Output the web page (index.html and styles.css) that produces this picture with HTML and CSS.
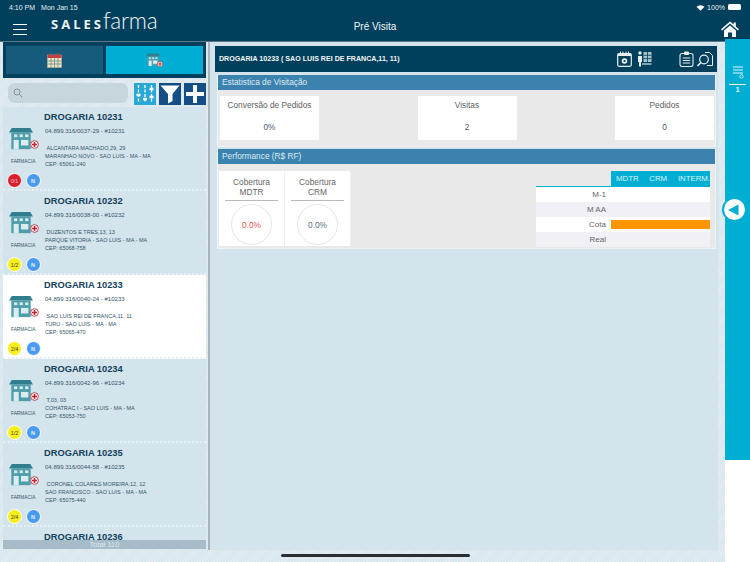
FILE: index.html
```html
<!DOCTYPE html>
<html lang="pt">
<head>
<meta charset="utf-8">
<title>Pré Visita</title>
<link rel="stylesheet" href="styles.css">
</head>
<body>
<svg class="defs" width="0" height="0">
  <defs>
    <symbol id="shop" viewBox="0 0 26 26">
      <rect x="2.5" y="6" width="21" height="18" fill="#4f9dab"/>
      <path d="M3 1h20l3 5H0z" fill="#2f7f8e"/>
      <rect x="5.500" y="8" width="3.500" height="3" fill="#d8eef0"/>
      <rect x="11.500" y="8" width="3.500" height="3" fill="#d8eef0"/>
      <rect x="17.500" y="8" width="3.500" height="3" fill="#d8eef0"/>
      <rect x="5" y="14" width="5.500" height="10" fill="#d8eef0"/>
      <rect x="13" y="14" width="8" height="6" fill="#d8eef0"/>
    </symbol>
    <symbol id="cross" viewBox="0 0 10 10">
      <circle cx="5" cy="5" r="4.300" fill="#fff" stroke="#b5323f" stroke-width="1"/>
      <path d="M5 2.200v5.600M2.200 5h5.600" stroke="#c8202f" stroke-width="1.800"/>
    </symbol>
  </defs>
</svg>
<div class="app">
  <header class="top">
    <div class="status">
      <span class="status-left"><span>4:10 PM</span><span>Mon Jan 15</span></span>
      <span class="status-right">
        <svg width="9" height="7" viewBox="0 0 18 14"><path d="M9 13.500 1 5.500a11.500 11.500 0 0 1 16 0z" fill="#fff"/></svg>
        <span>100%</span>
        <span class="battery"></span>
      </span>
    </div>
    <div class="nav">
      <div class="nav-left">
        <button class="burger" aria-label="Menu"><i></i><i></i><i></i></button>
        <div class="logo"><b>SALES</b><span>farma</span></div>
      </div>
      <div class="nav-title">Pré Visita</div>
      <div class="nav-right">
        <svg width="18" height="16" viewBox="0 0 18 16"><path d="M9 .5 0 8.200l1 1.200L9 2.600l8 6.800 1-1.200-3.200-2.700V1.400h-2.200v2.200z" fill="#fff"/><path d="M3 9.600 9 4.400l6 5.200V16h-4v-4.500H7V16H3z" fill="#fff"/></svg>
      </div>
    </div>
  </header>

  <div class="body">
    <aside class="side">
      <div class="tabs">
        <div class="tab">
          <svg width="15" height="15" viewBox="0 0 15 15"><rect x=".5" y="2" width="14" height="12.500" fill="#efe7c8" stroke="#c2b994" stroke-width=".5"/><rect x=".5" y="2" width="14" height="3" fill="#c8403c"/><rect x="3" y=".5" width="1.600" height="3" fill="#c8403c"/><rect x="10.400" y=".5" width="1.600" height="3" fill="#c8403c"/><path d="M.5 8h14M.5 11h14M4 5v9.500M7.500 5v9.500M11 5v9.500" stroke="#5d7f7c" stroke-width=".7"/></svg>
        </div>
        <div class="tab tab-on">
          <span class="pharm small"><svg class="pharm-b" viewBox="0 0 26 26"><use href="#shop"/></svg><svg class="pharm-c" viewBox="0 0 10 10"><use href="#cross"/></svg></span>
        </div>
      </div>
      <div class="tools">
        <div class="search">
          <svg width="10" height="10" viewBox="0 0 10 10"><circle cx="4" cy="4" r="3" fill="none" stroke="#7d8a90" stroke-width=".9"/><path d="m6.300 6.300 3 3" stroke="#7d8a90" stroke-width="1"/></svg>
        </div>
        <div class="tool tool-cyan">
          <svg width="22" height="22" viewBox="0 0 22 22"><path d="M4.500 2v18M11 2v18M17.500 2v18" stroke="#fff" stroke-width="1.300" stroke-dasharray="3 1.500"/><path d="M2.500 12h4M9 16h4M15.500 6h4M15.500 14h4" stroke="#fff" stroke-width="2.400"/></svg>
        </div>
        <div class="tool">
          <svg width="22" height="22" viewBox="0 0 22 22"><path d="M1.500 2.500h19l-7 8.500v7l-4.500 2.500V11z" fill="#fff"/></svg>
        </div>
        <div class="tool">
          <svg width="22" height="22" viewBox="0 0 22 22"><path d="M9 2h4v7h7v4h-7v7H9v-7H2V9h7z" fill="#fff"/></svg>
        </div>
      </div>
      <div class="list">
        <article class="item">
          <div class="item-left">
            <span class="pharm"><svg class="pharm-b" viewBox="0 0 26 26"><use href="#shop"/></svg><svg class="pharm-c" viewBox="0 0 10 10"><use href="#cross"/></svg></span>
            <div class="kind">FARMACIA</div>
            <div class="badges"><span class="badge red">0/1</span><span class="badge blue">N</span></div>
          </div>
          <div class="item-text">
            <h3>DROGARIA 10231</h3>
            <p class="cnpj">04.899.316/0037-29 - #10231</p>
            <p>&nbsp;ALCANTARA MACHADO,29, 29</p>
            <p>MARANHAO NOVO - SAO LUIS - MA - MA</p>
            <p>CEP: 65061-240</p>
          </div>
        </article>
        <article class="item">
          <div class="item-left">
            <span class="pharm"><svg class="pharm-b" viewBox="0 0 26 26"><use href="#shop"/></svg><svg class="pharm-c" viewBox="0 0 10 10"><use href="#cross"/></svg></span>
            <div class="kind">FARMACIA</div>
            <div class="badges"><span class="badge yellow">1/2</span><span class="badge blue">N</span></div>
          </div>
          <div class="item-text">
            <h3>DROGARIA 10232</h3>
            <p class="cnpj">04.899.316/0038-00 - #10232</p>
            <p>&nbsp;DUZENTOS E TRES,13, 13</p>
            <p>PARQUE VITORIA - SAO LUIS - MA - MA</p>
            <p>CEP: 65068-758</p>
          </div>
        </article>
        <article class="item item-on">
          <div class="item-left">
            <span class="pharm"><svg class="pharm-b" viewBox="0 0 26 26"><use href="#shop"/></svg><svg class="pharm-c" viewBox="0 0 10 10"><use href="#cross"/></svg></span>
            <div class="kind">FARMACIA</div>
            <div class="badges"><span class="badge yellow">2/4</span><span class="badge blue">N</span></div>
          </div>
          <div class="item-text">
            <h3>DROGARIA 10233</h3>
            <p class="cnpj">04.899.316/0040-24 - #10233</p>
            <p>&nbsp;SAO LUIS REI DE FRANCA,11, 11</p>
            <p>TURU - SAO LUIS - MA - MA</p>
            <p>CEP: 65065-470</p>
          </div>
        </article>
        <article class="item">
          <div class="item-left">
            <span class="pharm"><svg class="pharm-b" viewBox="0 0 26 26"><use href="#shop"/></svg><svg class="pharm-c" viewBox="0 0 10 10"><use href="#cross"/></svg></span>
            <div class="kind">FARMACIA</div>
            <div class="badges"><span class="badge yellow">1/2</span><span class="badge blue">N</span></div>
          </div>
          <div class="item-text">
            <h3>DROGARIA 10234</h3>
            <p class="cnpj">04.899.316/0042-96 - #10234</p>
            <p>&nbsp;T,03, 03</p>
            <p>COHATRAC I - SAO LUIS - MA - MA</p>
            <p>CEP: 65053-750</p>
          </div>
        </article>
        <article class="item">
          <div class="item-left">
            <span class="pharm"><svg class="pharm-b" viewBox="0 0 26 26"><use href="#shop"/></svg><svg class="pharm-c" viewBox="0 0 10 10"><use href="#cross"/></svg></span>
            <div class="kind">FARMACIA</div>
            <div class="badges"><span class="badge yellow">2/4</span><span class="badge blue">N</span></div>
          </div>
          <div class="item-text">
            <h3>DROGARIA 10235</h3>
            <p class="cnpj">04.899.316/0044-58 - #10235</p>
            <p>&nbsp;CORONEL COLARES MOREIRA,12, 12</p>
            <p>SAO FRANCISCO - SAO LUIS - MA - MA</p>
            <p>CEP: 65075-440</p>
          </div>
        </article>
        <article class="item">
          <div class="item-left"></div>
          <div class="item-text"><h3>DROGARIA 10236</h3></div>
        </article>
      </div>
      <div class="total">Total 110</div>
    </aside>

    <main class="main">
      <div class="title-bar">
        <span class="title-text">DROGARIA 10233 ( SAO LUIS REI DE FRANCA,11, 11)</span>
        <div class="title-icons">
          <svg width="15" height="16" viewBox="0 0 15 16"><rect x=".7" y="2.500" width="13.600" height="12.800" rx="1.500" fill="none" stroke="#e8eef0" stroke-width="1.200"/><path d="M.7 5h13.600v-1.500a1 1 0 0 0-1-1H1.700a1 1 0 0 0-1 1z" fill="#e8eef0"/><path d="M3.500.5v3M6 .5v3M9 .5v3M11.500.5v3" stroke="#e8eef0" stroke-width="1"/><circle cx="7.500" cy="10" r="2.800" fill="#e8eef0"/><circle cx="7.500" cy="10" r="1.100" fill="#00405c"/></svg>
          <svg class="ico-gap1" width="15" height="16" viewBox="0 0 15 16"><circle cx="3" cy="2" r="1.700" fill="#e8eef0"/><path d="M1 5h4v6H4v4.500H2V11H1z" fill="#e8eef0"/><rect x="6.500" y="1" width="8" height="10" fill="#a9c3cb"/><path d="M10.500 1v10M6.500 4.300h8M6.500 7.600h8" stroke="#00405c" stroke-width=".8"/><path d="M5 13h9.500" stroke="#a9c3cb" stroke-width="1.500"/></svg>
          <svg class="ico-gap2" width="15" height="16" viewBox="0 0 15 16"><rect x="1" y="2.500" width="13" height="13" rx="2" fill="none" stroke="#e8eef0" stroke-width="1.100"/><rect x="5" y=".5" width="5" height="3.500" rx="1" fill="#e8eef0"/><path d="M3.800 7h7.400M3.800 9.500h7.400M3.800 12h7.400" stroke="#e8eef0" stroke-width="1"/></svg>
          <svg class="ico-gap3" width="16" height="16" viewBox="0 0 16 16"><path d="M8 1.500h4.500l3 3v10H10" fill="none" stroke="#e8eef0" stroke-width="1"/><circle cx="7" cy="8.500" r="4.300" fill="none" stroke="#e8eef0" stroke-width="1.200"/><path d="m4 11.500-3.500 3.500" stroke="#e8eef0" stroke-width="1.600"/></svg>
        </div>
      </div>

      <section class="panel">
        <h2 class="panel-head">Estatistica de Visitação</h2>
        <div class="stats">
          <div class="stat"><div class="stat-label">Conversão de Pedidos</div><div class="stat-value">0%</div></div>
          <div class="stat"><div class="stat-label">Visitas</div><div class="stat-value">2</div></div>
          <div class="stat"><div class="stat-label">Pedidos</div><div class="stat-value">0</div></div>
        </div>
      </section>

      <section class="panel">
        <h2 class="panel-head">Performance (R$ RF)</h2>
        <div class="perf">
          <div class="cover">
            <div class="cover-cell">
              <div class="cover-label">Cobertura<br>MDTR</div>
              <div class="ring low">0.0%</div>
            </div>
            <div class="cover-cell">
              <div class="cover-label">Cobertura<br>CRM</div>
              <div class="ring">0.0%</div>
            </div>
          </div>
          <div class="table">
            <div class="row row-head"><span class="row-label"></span><span class="row-cols"><span>MDTR</span><span>CRM</span><span>INTERM.</span></span></div>
            <div class="row"><span class="row-label">M-1</span><span class="row-cols"></span></div>
            <div class="row row-alt"><span class="row-label">M AA</span><span class="row-cols"></span></div>
            <div class="row"><span class="row-label">Cota</span><span class="row-cols"><i class="bar"></i></span></div>
            <div class="row row-alt"><span class="row-label">Real</span><span class="row-cols"></span></div>
          </div>
        </div>
      </section>
    </main>

    <div class="rail-wrap">
      <div class="rail">
        <div class="rail-icon">
          <svg width="12" height="13" viewBox="0 0 12 13"><path d="M1 1h10M1 4h10M1 7h10" stroke="#e6f6fa" stroke-width="1.100"/><circle cx="9.500" cy="10.500" r="1.700" fill="none" stroke="#e6f6fa" stroke-width=".8"/></svg>
          <i class="rail-line"></i>
          <span>1</span>
        </div>
      </div>
      <div class="handle"><svg width="11" height="12" viewBox="0 0 11 12"><path d="M10.500.5v11L0 6z" fill="#00aed4"/></svg></div>
    </div>
  </div>
  <div class="home-bar"></div>
</div>
</body>
</html>
```
FILE: styles.css
```css
* { box-sizing: border-box; }
html, body { margin: 0; padding: 0; }
body { width: 750px; height: 562px; overflow: hidden; font-family: "Liberation Sans", Arial, sans-serif; background: repeating-linear-gradient(135deg, #e2ecf1 0 1px, #d8e6ed 1px 2px); }
.defs { position: absolute; }
h2, h3, p { margin: 0; font-weight: normal; }

.app { position: relative; width: 750px; height: 562px; display: flex; flex-direction: column; }

.top { height: 42px; flex: none; background: #00405c; border-bottom: 1px solid #5f7784; color: #fff; }
.status { height: 13px; padding: 1px 9px 0 9px; display: flex; justify-content: space-between; align-items: center; font-size: 7px; color: #e8eef2; }
.status-left { display: flex; gap: 6px; }
.status-right { display: flex; gap: 2px; align-items: center; }
.battery { width: 13px; height: 6px; background: #fff; border-radius: 1.500px; margin-left: 1px; }
.nav { height: 28px; display: grid; grid-template-columns: 1fr auto 1fr; align-items: center; }
.nav-left { display: flex; align-items: center; }
.burger { width: 14px; height: 11px; margin: 5px 0 0 13px; padding: 0; border: 0; background: none; display: flex; flex-direction: column; justify-content: space-between; }
.burger i { display: block; height: 1.300px; background: #fff; }
.logo { margin: -12px 0 0 24px; display: flex; align-items: baseline; color: #f1f6f8; }
.logo b { font-family: "Open Sans", sans-serif; font-size: 13px; font-weight: 700; letter-spacing: 3px; }
.logo span { font-family: "Lato", sans-serif; font-size: 22.500px; font-weight: 300; line-height: 1; letter-spacing: -.2px; margin-left: -1px; }
.nav-title { font-size: 10px; color: #f4f7f8; margin-top: -2px; }
.nav-right { display: flex; justify-content: flex-end; padding: 3px 11px 0 0; }

.body { flex: 1; min-height: 0; display: flex; }

.side { width: 210px; flex: none; padding-left: 3px; border-right: 2px solid #a9b4ba; display: flex; flex-direction: column; height: 508px; }
.side > * { width: 203px; }
.tabs { height: 36px; flex: none; background: #00405c; padding: 4px 3px; display: grid; grid-template-columns: 97px 97px; gap: 3px; }
.tab { background: #165a7c; display: flex; align-items: center; justify-content: center; }
.tab-on { background: #00aed4; }
.tools { height: 29px; flex: none; display: flex; align-items: flex-start; gap: 3px; padding: 5px 0 0 5px; }
.search { width: 120px; height: 20px; margin-right: 3px; background: #c7d6dd; border-radius: 7px; padding: 5px 0 0 5px; display: flex; align-items: flex-start; }
.tool { width: 22px; height: 22px; background: #134f85; flex: none; display: block; }
.tool svg { display: block; }
.tool-cyan { background: #29a8d8; }

.list { flex: none; height: 433px; overflow: hidden; }
.item { height: 84px; padding: 4px 0 0 0; display: flex; background: #d3e4ed; border-bottom: 2px dotted #e6f0f5; }
.item-on { background: #fff; }
.item-left { width: 41px; flex: none; padding: 16px 0 0 6px; }
.pharm { position: relative; display: block; width: 31px; height: 26px; }
.pharm-b { position: absolute; left: 0; top: 0; width: 24px; height: 24px; }
.pharm-c { position: absolute; left: 20.500px; top: 12.500px; width: 9px; height: 9px; }
.small { width: 18px; height: 15px; }
.small .pharm-b { width: 14px; height: 14px; }
.small .pharm-c { left: 11px; top: 8px; width: 6px; height: 6px; }
.kind { margin: 6px 0 0 2px; font-size: 4.800px; color: #33556a; white-space: nowrap; }
.badges { margin: 9px 0 0 -2px; display: flex; gap: 3.500px; }
.badge { width: 15px; height: 15px; flex: none; border-radius: 50%; border: 1px solid #fff; display: flex; align-items: center; justify-content: center; font-size: 5.500px; }
.red { background: #d8202a; color: #fbd; }
.yellow { background: #f8ef1a; color: #444; }
.blue { background: #4a9af0; color: #e6f1ff; font-weight: bold; }
.item-text { padding-left: 0; color: #33556a; }
.item-text h3 { font-size: 9.300px; line-height: 13px; font-weight: bold; color: #11415c; white-space: nowrap; }
.item-text p { line-height: 8px; white-space: nowrap; font-size: 5.500px; margin-left: 1px; }
.item-text .cnpj { margin: 3px 0 8px 1px; line-height: 9px; font-size: 6.050px; }
.total { flex: none; height: 9px; background: #a6bcc8; color: #dde8ec; font-size: 7.500px; line-height: 9px; text-align: center; }

.main { width: 508px; flex: none; height: 508px; padding: 4px 1px 0 5px; display: flex; flex-direction: column; margin-left: 0; background: #d3e4ed; }
.title-bar { height: 26px; flex: none; background: #00405c; display: flex; align-items: center; justify-content: space-between; padding: 0 4px; color: #f2f6f8; }
.title-text { font-size: 7.100px; font-weight: bold; }
.title-icons { display: flex; align-items: center; }
.ico-gap1 { margin-left: 5px; }
.ico-gap2 { margin-left: 27px; }
.ico-gap3 { margin-left: 3px; }
.panel { margin: 3px 1px 0 2px; background: #e9e9e9; border: 1px solid #eef3f6; border-top-width: 0; }
.panel + .panel { margin-top: 2px; }
.panel-head { height: 15px; background: #3b82ae; color: #dfecf3; font-size: 8.300px; line-height: 14px; padding-left: 4px; }
.stats { display: flex; justify-content: space-between; padding: 6px 1px 6px 2px; }
.stat { width: 99px; height: 44px; background: #fff; text-align: center; color: #5a6266; font-size: 8.300px; padding-top: 4px; }
.stat-label { height: 22px; line-height: 11px; }
.stat-value { color: #4a5a72; line-height: 11px; }
.perf { height: 84px; padding: 7px 5px 0 1px; display: flex; justify-content: space-between; align-items: flex-start; }
.cover { display: grid; grid-template-columns: 66px 66px; width: 132px; height: 75px; background: #fff; }
.cover-cell { padding: 6px 6px 0; text-align: center; border-right: 1px solid #f0f0f0; }
.cover-label { color: #666; font-size: 8.300px; line-height: 10px; height: 24px; border-bottom: 1px solid #b9b9b9; }
.ring { width: 41px; height: 41px; margin: 3px auto 0; border: 1.500px solid #e5e5e5; border-radius: 50%; display: flex; align-items: center; justify-content: center; font-size: 8.300px; color: #5a7183; }
.low { color: #e65353; }
.table { width: 174px; font-size: 8px; color: #666; }
.row { height: 15px; display: flex; background: #fff; }
.row-alt { background: #f0f0f6; }
.row-label { width: 75px; flex: none; text-align: right; padding-right: 5px; line-height: 15px; }
.row-cols { flex: 1; position: relative; display: flex; }
.row-head { height: 16px; background: transparent; border-bottom: 1px solid #00aed4; }
.row-head .row-cols { background: #00aed4; color: #d9f3fa; line-height: 15px; justify-content: space-between; padding: 0 0 0 5px; font-size: 7.800px; }
.bar { position: absolute; left: 0; right: 0; top: 3px; height: 9px; background: #ff9500; }

.rail-wrap { position: relative; width: 25px; margin-left: 7px; margin-top: -3px; flex: none; height: 523px; background: #fff; }
.rail { height: 421px; background: #00aed4; padding-top: 27px; }
.rail-icon { display: flex; flex-direction: column; align-items: center; color: #e6f6fa; font-size: 7.500px; font-weight: bold; line-height: 10px; }
.rail-icon svg { margin-left: 0; }
.rail-line { width: 17px; height: 1.300px; background: #e6f6fa; margin-top: 5px; }
.handle { position: absolute; left: -3px; top: 158px; width: 25px; height: 25px; border-radius: 50%; background: #fff; border: 2px solid #00aed4; display: flex; align-items: center; justify-content: center; padding-right: 2px; }

.home-bar { position: absolute; left: 281px; bottom: 5px; width: 189px; height: 3px; border-radius: 2px; background: #2b2f33; }
```
